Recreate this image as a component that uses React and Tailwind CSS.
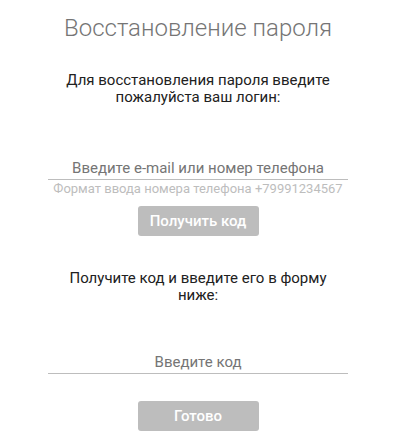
export default function App() {
  return (
    <div className="w-[396px] flex flex-col items-center bg-white text-center" style={{ fontFamily: "Roboto, 'Liberation Sans', sans-serif" }}>
      <h1 className="mt-[14px] text-[24px] leading-[28px] font-light text-[#757575]">Восстановление пароля</h1>
      <p className="mt-[30px] w-[280px] text-[15px] leading-[17px] text-[#212121]">
        Для восстановления пароля введите пожалуйста ваш логин:
      </p>
      <input
        type="text"
        placeholder="Введите e-mail или номер телефона"
        className="mt-[50px] block w-[300px] h-[24px] border-b border-[#bdbdbd] text-center text-[15px] leading-[24px] text-[#212121] placeholder:text-[#757575] outline-none"
      />
      <div className="mt-[1px] text-[13px] leading-[16px] text-[#bdbdbd]">Формат ввода номера телефона +79991234567</div>
      <button className="mt-[9px] w-[121px] h-[30px] rounded-[3px] bg-[#bdbdbd] text-white text-[15px] font-medium">Получить код</button>
      <p className="mt-[34px] w-[280px] text-[15px] leading-[17px] text-[#212121]">
        Получите код и введите его в форму ниже:
      </p>
      <input
        type="text"
        placeholder="Введите код"
        className="mt-[46px] block w-[300px] h-[24px] border-b border-[#bdbdbd] text-center text-[15px] leading-[24px] text-[#212121] placeholder:text-[#757575] outline-none"
      />
      <button className="mt-[27px] w-[121px] h-[30px] rounded-[3px] bg-[#bdbdbd] text-white text-[15px] font-medium">Готово</button>
    </div>
  );
}
